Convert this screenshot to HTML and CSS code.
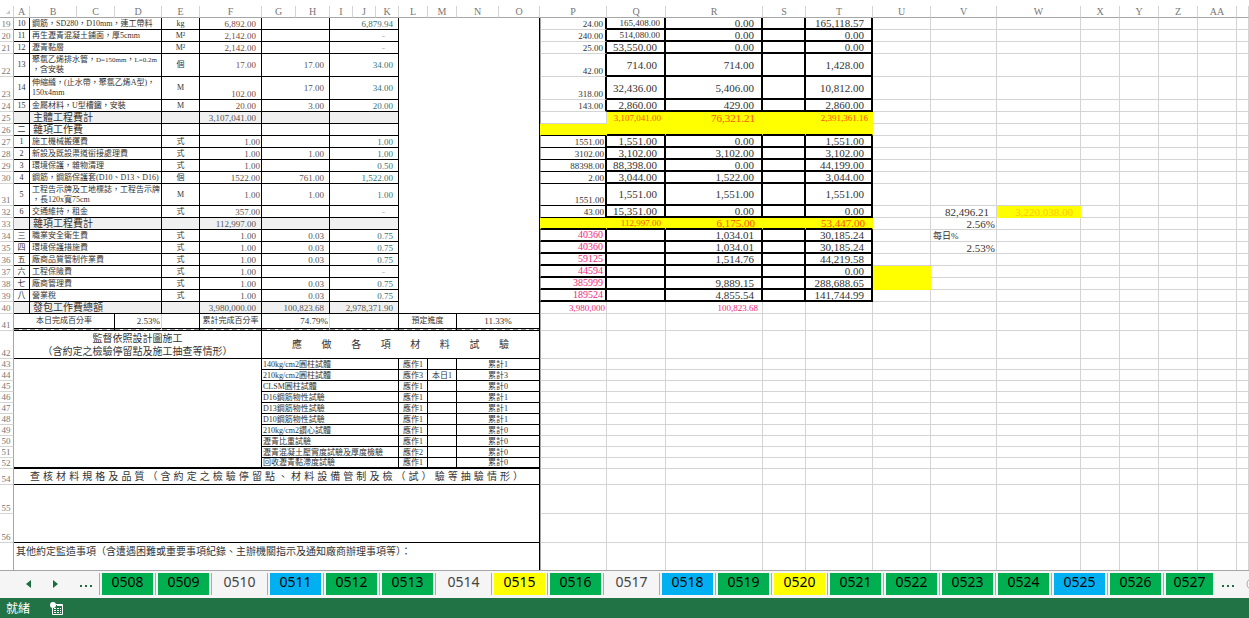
FILE: index.html
```
<!DOCTYPE html>
<html lang="zh-Hant">
<head>
    <meta charset="UTF-8">
    <meta name="viewport" content="width=device-width, initial-scale=1.0">
    <title>監工日報表</title>
    <link rel="stylesheet" href="styles.css">
</head>
<body>
    <main class="sheet">
        <table class="grid">
            <colgroup>
                <col class="w14"><col class="w16"><col class="w47"><col class="w38"><col class="w47"><col class="w38"><col class="w62">
                <col class="w34"><col class="w34"><col class="w23"><col class="w23"><col class="w23"><col class="w29"><col class="w29">
                <col class="w42"><col class="w41"><col class="w67"><col class="w59"><col class="w97"><col class="w43"><col class="w67">
                <col class="w58"><col class="w66"><col class="w84"><col class="w39"><col class="w39"><col class="w39"><col class="w39"><col>
            </colgroup>
            <thead>
                <tr class="h12">
                    <th><svg class="corner" viewBox="0 0 4 4"><path d="M4 0v4H0z"/></svg></th>
                    <th>A</th><th>B</th><th>C</th><th>D</th><th>E</th><th>F</th><th>G</th><th>H</th><th>I</th><th>J</th><th>K</th><th>L</th><th>M</th><th>N</th><th>O</th>
                    <th>P</th><th>Q</th><th>R</th><th>S</th><th>T</th><th>U</th><th>V</th><th>W</th><th>X</th><th>Y</th><th>Z</th><th>AA</th><th></th>
                </tr>
            </thead>
            <tbody>
                <!-- main works -->
                <tr class="h12">
                    <th>19</th><td class="box">10</td><td class="box desc" colspan="3">鋼筋，SD280，D10mm，連工帶料</td><td class="box">kg</td><td class="box num low warm">6,892.00</td><td class="box num" colspan="2"></td><td class="box num cool" colspan="3">6,879.94</td>
                    <td class="box" colspan="4" rowspan="22"></td>
                    <td class="p qty">24.00</td><td class="amt small">165,408.00</td><td class="amt">0.00</td><td class="amt"></td><td class="amt">165,118.57</td>
                    <td></td><td></td><td></td><td></td><td></td><td></td><td></td><td></td>
                </tr>
                <tr class="h12">
                    <th>20</th><td class="box">11</td><td class="box desc" colspan="3">再生瀝青混凝土鋪面，厚5cmm</td><td class="box">M²</td><td class="box num low warm">2,142.00</td><td class="box num" colspan="2"></td><td class="box num nil" colspan="3">-</td>
                    <td class="p qty">240.00</td><td class="amt small">514,080.00</td><td class="amt">0.00</td><td class="amt"></td><td class="amt">0.00</td>
                    <td></td><td></td><td></td><td></td><td></td><td></td><td></td><td></td>
                </tr>
                <tr class="h12">
                    <th>21</th><td class="box">12</td><td class="box desc" colspan="3">瀝青黏層</td><td class="box">M²</td><td class="box num low warm">2,142.00</td><td class="box num" colspan="2"></td><td class="box num nil" colspan="3">-</td>
                    <td class="p qty">25.00</td><td class="amt">53,550.00</td><td class="amt">0.00</td><td class="amt"></td><td class="amt">0.00</td>
                    <td></td><td></td><td></td><td></td><td></td><td></td><td></td><td></td>
                </tr>
                <tr class="h23">
                    <th>22</th><td class="box">13</td><td class="box desc" colspan="3">聚氯乙烯排水管，<span class="dim">D=150mm</span>，<span class="dim">L=0.2m</span><br>，含安裝</td><td class="box">個</td><td class="box num warm">17.00</td><td class="box num" colspan="2">17.00</td><td class="box num cool" colspan="3">34.00</td>
                    <td class="p qty">42.00</td><td class="amt">714.00</td><td class="amt">714.00</td><td class="amt"></td><td class="amt">1,428.00</td>
                    <td></td><td></td><td></td><td></td><td></td><td></td><td></td><td></td>
                </tr>
                <tr class="h23">
                    <th>23</th><td class="box">14</td><td class="box desc" colspan="3">伸縮縫，(止水帶，聚氯乙烯A型)，<br>150x4mm</td><td class="box">M</td><td class="box num low warm">102.00</td><td class="box num" colspan="2">17.00</td><td class="box num cool" colspan="3">34.00</td>
                    <td class="p qty">318.00</td><td class="amt">32,436.00</td><td class="amt">5,406.00</td><td class="amt"></td><td class="amt">10,812.00</td>
                    <td></td><td></td><td></td><td></td><td></td><td></td><td></td><td></td>
                </tr>
                <tr class="h12">
                    <th>24</th><td class="box">15</td><td class="box desc" colspan="3">金屬材料，U型槽鐵，安裝</td><td class="box">M</td><td class="box num low warm">20.00</td><td class="box num" colspan="2">3.00</td><td class="box num cool" colspan="3">20.00</td>
                    <td class="p qty">143.00</td><td class="amt">2,860.00</td><td class="amt">429.00</td><td class="amt"></td><td class="amt">2,860.00</td>
                    <td></td><td></td><td></td><td></td><td></td><td></td><td></td><td></td>
                </tr>
                <tr class="h12 total">
                    <th>25</th><td class="box"></td><td class="box desc title" colspan="3">主體工程費計</td><td class="box"></td><td class="box num">3,107,041.00</td><td class="box num" colspan="2"></td><td class="box num" colspan="3"></td>
                    <td class="p"></td><td class="mark small">3,107,041.00</td><td class="mark">76,321.21</td><td class="mark"></td><td class="mark small">2,391,361.16</td>
                    <td></td><td></td><td></td><td></td><td></td><td></td><td></td><td></td>
                </tr>

                <!-- miscellaneous works -->
                <tr class="h12">
                    <th>26</th><td class="box">二</td><td class="box desc title" colspan="3">雜項工作費</td><td class="box"></td><td class="box"></td><td class="box" colspan="2"></td><td class="box" colspan="3"></td>
                    <td class="p mark line"></td><td class="mark base"></td><td class="mark base"></td><td class="mark base"></td><td class="mark base"></td>
                    <td></td><td></td><td></td><td></td><td></td><td></td><td></td><td></td>
                </tr>
                <tr class="h12">
                    <th>27</th><td class="box">1</td><td class="box desc" colspan="3">施工機械搬運費</td><td class="box">式</td><td class="box num low edge">1.00</td><td class="box num" colspan="2"></td><td class="box num cool" colspan="3">1.00</td>
                    <td class="p qty line small">1551.00</td><td class="amt">1,551.00</td><td class="amt">0.00</td><td class="amt"></td><td class="amt">1,551.00</td>
                    <td></td><td></td><td></td><td></td><td></td><td></td><td></td><td></td>
                </tr>
                <tr class="h12">
                    <th>28</th><td class="box">2</td><td class="box desc" colspan="3">新設及既設渠道銜接處理費</td><td class="box">式</td><td class="box num low edge">1.00</td><td class="box num" colspan="2">1.00</td><td class="box num cool" colspan="3">1.00</td>
                    <td class="p qty line small">3102.00</td><td class="amt">3,102.00</td><td class="amt">3,102.00</td><td class="amt"></td><td class="amt">3,102.00</td>
                    <td></td><td></td><td></td><td></td><td></td><td></td><td></td><td></td>
                </tr>
                <tr class="h12">
                    <th>29</th><td class="box">3</td><td class="box desc" colspan="3">環境保護，雜物清理</td><td class="box">式</td><td class="box num low edge">1.00</td><td class="box num" colspan="2"></td><td class="box num cool" colspan="3">0.50</td>
                    <td class="p qty line small">88398.00</td><td class="amt">88,398.00</td><td class="amt">0.00</td><td class="amt"></td><td class="amt">44,199.00</td>
                    <td></td><td></td><td></td><td></td><td></td><td></td><td></td><td></td>
                </tr>
                <tr class="h12">
                    <th>30</th><td class="box">4</td><td class="box desc" colspan="3">鋼筋，鋼筋保護套(D10、D13、D16)</td><td class="box">個</td><td class="box num low edge">1522.00</td><td class="box num" colspan="2">761.00</td><td class="box num cool" colspan="3">1,522.00</td>
                    <td class="p qty line small">2.00</td><td class="amt">3,044.00</td><td class="amt">1,522.00</td><td class="amt"></td><td class="amt">3,044.00</td>
                    <td></td><td></td><td></td><td></td><td></td><td></td><td></td><td></td>
                </tr>
                <tr class="h22">
                    <th>31</th><td class="box">5</td><td class="box desc" colspan="3">工程告示牌及工地標誌，工程告示牌<br>，長120x寬75cm</td><td class="box">M</td><td class="box num edge">1.00</td><td class="box num" colspan="2">1.00</td><td class="box num cool" colspan="3">1.00</td>
                    <td class="p qty line small">1551.00</td><td class="amt">1,551.00</td><td class="amt">1,551.00</td><td class="amt"></td><td class="amt">1,551.00</td>
                    <td></td><td></td><td></td><td></td><td></td><td></td><td></td><td></td>
                </tr>
                <tr class="h12">
                    <th>32</th><td class="box">6</td><td class="box desc" colspan="3">交通維持，租金</td><td class="box">式</td><td class="box num low edge">357.00</td><td class="box num" colspan="2"></td><td class="box num nil" colspan="3">-</td>
                    <td class="p qty line small">43.00</td><td class="amt">15,351.00</td><td class="amt">0.00</td><td class="amt"></td><td class="amt">0.00</td>
                    <td></td><td class="side">82,496.21</td><td class="side fill faint">3,220,038.00</td><td></td><td></td><td></td><td></td><td></td>
                </tr>
                <tr class="h12 total">
                    <th>33</th><td class="box"></td><td class="box desc title" colspan="3">雜項工程費計</td><td class="box"></td><td class="box num">112,997.00</td><td class="box num" colspan="2"></td><td class="box num" colspan="3"></td>
                    <td class="p mark base"></td><td class="mark base small">112,997.00</td><td class="mark base">6,175.00</td><td class="mark base"></td><td class="mark base">53,447.00</td>
                    <td></td><td class="side rate">2.56%</td><td></td><td></td><td></td><td></td><td></td><td></td>
                </tr>

                <!-- fees and tax -->
                <tr class="h12">
                    <th>34</th><td class="box">三</td><td class="box desc" colspan="3">職業安全衛生費</td><td class="box">式</td><td class="box num">1.00</td><td class="box num" colspan="2">0.03</td><td class="box num cool" colspan="3">0.75</td>
                    <td class="p qty fee">40360</td><td class="amt"></td><td class="amt">1,034.01</td><td class="amt"></td><td class="amt">30,185.24</td>
                    <td></td><td class="note">每日%</td><td></td><td></td><td></td><td></td><td></td><td></td>
                </tr>
                <tr class="h12">
                    <th>35</th><td class="box">四</td><td class="box desc" colspan="3">環境保護措施費</td><td class="box">式</td><td class="box num">1.00</td><td class="box num" colspan="2">0.03</td><td class="box num cool" colspan="3">0.75</td>
                    <td class="p qty fee">40360</td><td class="amt"></td><td class="amt">1,034.01</td><td class="amt"></td><td class="amt">30,185.24</td>
                    <td></td><td class="side rate">2.53%</td><td></td><td></td><td></td><td></td><td></td><td></td>
                </tr>
                <tr class="h12">
                    <th>36</th><td class="box">五</td><td class="box desc" colspan="3">廠商品質管制作業費</td><td class="box">式</td><td class="box num">1.00</td><td class="box num" colspan="2">0.03</td><td class="box num cool" colspan="3">0.75</td>
                    <td class="p qty fee">59125</td><td class="amt"></td><td class="amt">1,514.76</td><td class="amt"></td><td class="amt">44,219.58</td>
                    <td></td><td></td><td></td><td></td><td></td><td></td><td></td><td></td>
                </tr>
                <tr class="h12">
                    <th>37</th><td class="box">六</td><td class="box desc" colspan="3">工程保險費</td><td class="box">式</td><td class="box num">1.00</td><td class="box num" colspan="2"></td><td class="box num nil" colspan="3">-</td>
                    <td class="p qty fee">44594</td><td class="amt"></td><td class="amt"></td><td class="amt"></td><td class="amt">0.00</td>
                    <td class="fill"></td><td></td><td></td><td></td><td></td><td></td><td></td><td></td>
                </tr>
                <tr class="h12">
                    <th>38</th><td class="box">七</td><td class="box desc" colspan="3">廠商管理費</td><td class="box">式</td><td class="box num">1.00</td><td class="box num" colspan="2">0.03</td><td class="box num cool" colspan="3">0.75</td>
                    <td class="p qty fee">385999</td><td class="amt"></td><td class="amt">9,889.15</td><td class="amt"></td><td class="amt">288,688.65</td>
                    <td class="fill"></td><td></td><td></td><td></td><td></td><td></td><td></td><td></td>
                </tr>
                <tr class="h12">
                    <th>39</th><td class="box">八</td><td class="box desc" colspan="3">營業稅</td><td class="box">式</td><td class="box num">1.00</td><td class="box num" colspan="2">0.03</td><td class="box num cool" colspan="3">0.75</td>
                    <td class="p qty fee">189524</td><td class="amt"></td><td class="amt">4,855.54</td><td class="amt"></td><td class="amt">141,744.99</td>
                    <td></td><td></td><td></td><td></td><td></td><td></td><td></td><td></td>
                </tr>
                <tr class="h12 total">
                    <th>40</th><td class="box"></td><td class="box desc title" colspan="3">發包工作費總額</td><td class="box"></td><td class="box num">3,980,000.00</td><td class="box num" colspan="2">100,823.68</td><td class="box num" colspan="3">2,978,371.90</td>
                    <td class="p sum">3,980,000</td><td></td><td class="sum inset">100,823.68</td><td></td><td></td>
                    <td></td><td></td><td></td><td></td><td></td><td></td><td></td><td></td>
                </tr>
                <tr class="h17 progress">
                    <th>41</th><td class="box" colspan="3">本日完成百分率</td><td class="rate">2.53%</td><td class="box"></td><td class="box">累計完成百分率</td><td class="rate" colspan="2">74.79%</td><td class="box" colspan="3"></td><td class="box" colspan="2">預定進度</td><td class="box percent" colspan="2">11.33%</td>
                    <td class="p"></td><td></td><td></td><td></td><td></td><td></td><td></td><td></td><td></td><td></td><td></td><td></td><td></td>
                </tr>

                <!-- material tests -->
                <tr class="h28">
                    <th>42</th><td class="box heading" colspan="6">監督依照設計圖施工<br>（含約定之檢驗停留點及施工抽查等情形）</td><td class="box heading spread wide" colspan="9">應做各項材料試驗</td>
                    <td class="p"></td><td></td><td></td><td></td><td></td><td></td><td></td><td></td><td></td><td></td><td></td><td></td><td></td>
                </tr>
                <tr class="h11 test">
                    <th>43</th><td class="box heavy" colspan="6" rowspan="10"></td><td class="box label" colspan="5">140kg/cm2圓柱試體</td><td class="box">應作1</td><td class="box"></td><td class="box" colspan="2">累計1</td>
                    <td class="p"></td><td></td><td></td><td></td><td></td><td></td><td></td><td></td><td></td><td></td><td></td><td></td><td></td>
                </tr>
                <tr class="h11 test">
                    <th>44</th><td class="box label" colspan="5">210kg/cm2圓柱試體</td><td class="box">應作3</td><td class="box">本日1</td><td class="box" colspan="2">累計3</td>
                    <td class="p"></td><td></td><td></td><td></td><td></td><td></td><td></td><td></td><td></td><td></td><td></td><td></td><td></td>
                </tr>
                <tr class="h11 test">
                    <th>45</th><td class="box label" colspan="5">CLSM圓柱試體</td><td class="box">應作1</td><td class="box"></td><td class="box" colspan="2">累計0</td>
                    <td class="p"></td><td></td><td></td><td></td><td></td><td></td><td></td><td></td><td></td><td></td><td></td><td></td><td></td>
                </tr>
                <tr class="h11 test">
                    <th>46</th><td class="box label" colspan="5">D16鋼筋物性試驗</td><td class="box">應作1</td><td class="box"></td><td class="box" colspan="2">累計1</td>
                    <td class="p"></td><td></td><td></td><td></td><td></td><td></td><td></td><td></td><td></td><td></td><td></td><td></td><td></td>
                </tr>
                <tr class="h11 test">
                    <th>47</th><td class="box label" colspan="5">D13鋼筋物性試驗</td><td class="box">應作1</td><td class="box"></td><td class="box" colspan="2">累計1</td>
                    <td class="p"></td><td></td><td></td><td></td><td></td><td></td><td></td><td></td><td></td><td></td><td></td><td></td><td></td>
                </tr>
                <tr class="h11 test">
                    <th>48</th><td class="box label" colspan="5">D10鋼筋物性試驗</td><td class="box">應作1</td><td class="box"></td><td class="box" colspan="2">累計1</td>
                    <td class="p"></td><td></td><td></td><td></td><td></td><td></td><td></td><td></td><td></td><td></td><td></td><td></td><td></td>
                </tr>
                <tr class="h11 test">
                    <th>49</th><td class="box label" colspan="5">210kg/cm2鑽心試體</td><td class="box">應作1</td><td class="box"></td><td class="box" colspan="2">累計0</td>
                    <td class="p"></td><td></td><td></td><td></td><td></td><td></td><td></td><td></td><td></td><td></td><td></td><td></td><td></td>
                </tr>
                <tr class="h11 test">
                    <th>50</th><td class="box label" colspan="5">瀝青比重試驗</td><td class="box">應作1</td><td class="box"></td><td class="box" colspan="2">累計0</td>
                    <td class="p"></td><td></td><td></td><td></td><td></td><td></td><td></td><td></td><td></td><td></td><td></td><td></td><td></td>
                </tr>
                <tr class="h11 test">
                    <th>51</th><td class="box label" colspan="5">瀝青混凝土壓實度試驗及厚度檢驗</td><td class="box">應作2</td><td class="box"></td><td class="box" colspan="2">累計0</td>
                    <td class="p"></td><td></td><td></td><td></td><td></td><td></td><td></td><td></td><td></td><td></td><td></td><td></td><td></td>
                </tr>
                <tr class="h11 test">
                    <th>52</th><td class="box label heavy" colspan="5">回收瀝青黏滯度試驗</td><td class="box heavy">應作1</td><td class="box heavy"></td><td class="box heavy" colspan="2">累計0</td>
                    <td class="p"></td><td></td><td></td><td></td><td></td><td></td><td></td><td></td><td></td><td></td><td></td><td></td><td></td>
                </tr>

                <!-- remarks -->
                <tr class="h16">
                    <th>54</th><td class="box heading spread" colspan="15">查核材料規格及品質（含約定之檢驗停留點、材料設備管制及檢（試）驗等抽驗情形）</td>
                    <td class="p"></td><td></td><td></td><td></td><td></td><td></td><td></td><td></td><td></td><td></td><td></td><td></td><td></td>
                </tr>
                <tr class="h29">
                    <th>55</th><td class="box" colspan="15" rowspan="2"></td>
                    <td class="p"></td><td></td><td></td><td></td><td></td><td></td><td></td><td></td><td></td><td></td><td></td><td></td><td></td>
                </tr>
                <tr class="h29">
                    <th>56</th>
                    <td class="p"></td><td></td><td></td><td></td><td></td><td></td><td></td><td></td><td></td><td></td><td></td><td></td><td></td>
                </tr>
                <tr class="h27 last">
                    <th></th><td class="box heading remark" colspan="15">其他約定監造事項（含遭遇困難或重要事項紀錄、主辦機關指示及通知廠商辦理事項等）：</td>
                    <td class="p"></td><td></td><td></td><td></td><td></td><td></td><td></td><td></td><td></td><td></td><td></td><td></td><td></td>
                </tr>
            </tbody>
        </table>
    </main>

    <nav class="tabs">
        <div class="tab-nav">
            <button type="button" aria-label="上一個"><svg width="5" height="8" viewBox="0 0 5 8"><path d="M5 0v8L0 4z"/></svg></button>
            <button type="button" aria-label="下一個"><svg width="5" height="8" viewBox="0 0 5 8"><path d="M0 0v8l5-4z"/></svg></button>
            <button type="button" aria-label="更多工作表"><svg width="12" height="8" viewBox="0 0 12 8"><path d="M0 5h2v2H0zM5 5h2v2H5zM10 5h2v2h-2z"/></svg></button>
        </div>
        <div class="tab"><button type="button" class="green">0508</button></div>
        <div class="tab"><button type="button" class="green">0509</button></div>
        <div class="tab"><button type="button">0510</button></div>
        <div class="tab"><button type="button" class="blue">0511</button></div>
        <div class="tab"><button type="button" class="green">0512</button></div>
        <div class="tab"><button type="button" class="green">0513</button></div>
        <div class="tab"><button type="button">0514</button></div>
        <div class="tab"><button type="button" class="yellow">0515</button></div>
        <div class="tab"><button type="button" class="green">0516</button></div>
        <div class="tab"><button type="button">0517</button></div>
        <div class="tab"><button type="button" class="blue">0518</button></div>
        <div class="tab"><button type="button" class="green">0519</button></div>
        <div class="tab"><button type="button" class="yellow">0520</button></div>
        <div class="tab"><button type="button" class="green">0521</button></div>
        <div class="tab"><button type="button" class="green">0522</button></div>
        <div class="tab"><button type="button" class="green">0523</button></div>
        <div class="tab"><button type="button" class="green">0524</button></div>
        <div class="tab"><button type="button" class="blue">0525</button></div>
        <div class="tab"><button type="button" class="green">0526</button></div>
        <div class="tab"><button type="button" class="green cut">0527</button></div>
        <div class="tab-end">
            <button type="button" aria-label="更多工作表"><svg width="12" height="8" viewBox="0 0 12 8"><path d="M0 5h2v2H0zM5 5h2v2H5zM10 5h2v2h-2z"/></svg></button>
            <button type="button" class="add" aria-label="新增工作表"><svg width="14" height="14" viewBox="0 0 14 14"><circle cx="7" cy="7" r="6"/><path d="M7 4v6M4 7h6"/></svg></button>
        </div>
    </nav>

    <footer class="status">
        <span>就緒</span>
        <svg width="13" height="13" viewBox="0 0 13 13">
            <path d="M6 2.500h6.500v10H2.500V6" fill="none" stroke="#fff"/>
            <path d="M7 3h5v1H7z" fill="#fff"/>
            <circle cx="3" cy="3" r="3" fill="#fff"/>
            <path d="M4 6.500h2M7 6.500h2M10 6.500h1M4 8.500h2M7 8.500h2M10 8.500h1M4 10.500h2M7 10.500h2M10 10.500h1" stroke="#fff"/>
        </svg>
    </footer>
</body>
</html>
```
FILE: styles.css
```
* {
    box-sizing: border-box;
}

body {
    margin: 0;
    min-height: 100vh;
    display: flex;
    flex-direction: column;
    background-color: #fff;
    font-family: "Liberation Serif", "Noto Sans CJK TC", serif;
    overflow: hidden;
}

.sheet {
    flex: 1;
    padding-top: 6px;
    overflow: hidden;
}

.grid {
    width: 100%;
    table-layout: fixed;
    border-collapse: separate;
    border-spacing: 0;
}

/* column widths */
.w14 { width: 14px; }
.w16 { width: 16px; }
.w23 { width: 23px; }
.w29 { width: 29px; }
.w34 { width: 34px; }
.w38 { width: 38px; }
.w39 { width: 39px; }
.w41 { width: 41px; }
.w42 { width: 42px; }
.w43 { width: 43px; }
.w47 { width: 47px; }
.w58 { width: 58px; }
.w59 { width: 59px; }
.w62 { width: 62px; }
.w66 { width: 66px; }
.w67 { width: 67px; }
.w84 { width: 84px; }
.w97 { width: 97px; }

/* row heights */
.h11 { height: 11px; }
.h12 { height: 12px; }
.h16 { height: 16px; }
.h17 { height: 17px; }
.h22 { height: 22px; }
.h23 { height: 23px; }
.h27 { height: 27px; }
.h28 { height: 28px; }
.h29 { height: 29px; }

.grid th, .grid td {
    padding: 0;
    border-right: 1px solid #d4d4d4;
    border-bottom: 1px solid #d4d4d4;
    font-size: 8px;
    font-weight: normal;
    line-height: 10px;
    text-align: center;
    white-space: nowrap;
    color: #333;
}

.grid th {
    font-size: 10px;
    color: #777;
}

.grid thead th {
    border-bottom-color: #a6a6a6;
}

.grid tbody th {
    border-right-color: #a6a6a6;
    padding-right: 1px;
    font-size: 9px;
    vertical-align: bottom;
}

.corner {
    display: block;
    width: 4px;
    height: 4px;
    margin-left: 6px;
    fill: #c8c8c8;
}

.grid .box {
    border-color: #000;
}

.grid .p {
    border-left: 1px solid #a6a6a6;
}

.grid .desc {
    text-align: left;
    padding-left: 2px;
}

.grid .label {
    text-align: left;
    padding-left: 1px;
}

.grid .title {
    font-size: 10px;
    padding-left: 3px;
}

.dim {
    font-size: 7px;
}

.grid .num {
    text-align: right;
    font-size: 9px;
    padding-right: 5px;
    color: #555;
}

.grid .low {
    vertical-align: bottom;
}

.grid .edge {
    padding-right: 1px;
}

.grid .warm {
    color: #7d4a3c;
}

.grid .cool {
    color: #3a7474;
}

.grid .nil {
    padding-right: 13px;
    color: #aaa;
}

.total .box {
    background-color: #f0f0f0;
}

/* money columns */
.grid .qty {
    border-right: 2px solid #000;
    text-align: right;
    vertical-align: bottom;
    font-size: 9px;
    padding-right: 2px;
}

.grid .fee {
    border-bottom: 2px solid #000;
    font-size: 10px;
    color: #f0287c;
}

.grid .amt, .grid .mark, .grid .side {
    text-align: right;
    font-size: 11px;
    padding-right: 7px;
}

.grid .amt {
    border-right: 2px solid #000;
    border-bottom: 2px solid #000;
}

.grid .mark, .grid .fill {
    background-color: #ff0;
    border-color: #ff0;
}

.grid .mark {
    color: #ff5000;
}

.grid .line {
    border-bottom-color: #000;
}

.grid .base {
    border-bottom: 2px solid #000;
}

.grid .small {
    font-size: 9px;
    padding-right: 4px;
}

.grid .qty.small {
    padding-right: 1px;
}

.grid .faint {
    color: #ffc800;
}

.grid .rate {
    text-align: right;
    padding-right: 1px;
}

.grid .note {
    text-align: left;
    font-size: 9px;
    padding-left: 2px;
}

.grid .sum {
    text-align: right;
    font-size: 9px;
    padding-right: 1px;
    color: #f0287c;
}

.grid .inset {
    padding-right: 4px;
}

/* progress row, closed by a double rule with the page break inside it */
.progress .rate, .progress .percent {
    font-size: 9px;
}

.grid .progress .rate, .grid .progress .box {
    border-bottom: 3px double #000;
    background-image: repeating-linear-gradient(90deg, #999 0 5px, #fff 5px 8px);
    background-size: 100% 3px;
    background-position: bottom;
    background-origin: border-box;
    background-repeat: no-repeat;
}

.test th, .grid .test td {
    line-height: 9px;
}

.grid .heavy {
    border-bottom: 2px solid #000;
}

.grid .heading {
    font-size: 10px;
    line-height: 13px;
}

.grid .spread {
    padding: 0 16px;
    text-align-last: justify;
}

.grid .wide {
    padding: 0 30px;
}

.grid .remark {
    text-align: left;
    vertical-align: top;
    padding: 2px 2px 0;
}

.grid .last th, .grid .last td {
    border-bottom: 0;
}

/* sheet tabs */
.tabs {
    display: flex;
    height: 28px;
    padding-top: 2px;
    border-top: 1px solid #a6a6a6;
    background-color: #f5f5f5;
    font-family: "Noto Sans", sans-serif;
}

.tabs button {
    padding: 0;
    border: 0;
    background: none;
    font-family: inherit;
    font-size: 14px;
    line-height: 18px;
    color: #444;
    cursor: pointer;
}

.tab-nav {
    flex: 0 0 99px;
    display: flex;
    align-items: center;
    gap: 22px;
    height: 22px;
    padding-left: 26px;
}

.tab-nav svg, .tab-end svg {
    display: block;
    fill: #1e6b41;
}

.tab {
    flex: 0 0 56px;
    height: 22px;
    padding-left: 2px;
    border-left: 1px solid #ababab;
}

.tabs .tab button {
    display: block;
    width: 51px;
    height: 22px;
    padding-bottom: 4px;
}

.tabs .tab .green {
    background-color: #00b050;
    color: #000;
}

.tabs .tab .blue {
    background-color: #00b0f0;
    color: #000;
}

.tabs .tab .yellow {
    background-color: #ff0;
    color: #000;
}

.tabs .tab .cut {
    width: 47px;
}

.tab-end {
    display: flex;
    align-items: center;
    gap: 12px;
    height: 22px;
    padding-left: 3px;
}

.tab-end .add svg {
    fill: none;
    stroke: #aaa;
}

.status {
    display: flex;
    align-items: center;
    gap: 20px;
    height: 20px;
    padding-left: 6px;
    background-color: #217346;
    color: #fff;
    font-family: "Noto Sans CJK TC", sans-serif;
    font-size: 12px;
    line-height: 20px;
}
```
